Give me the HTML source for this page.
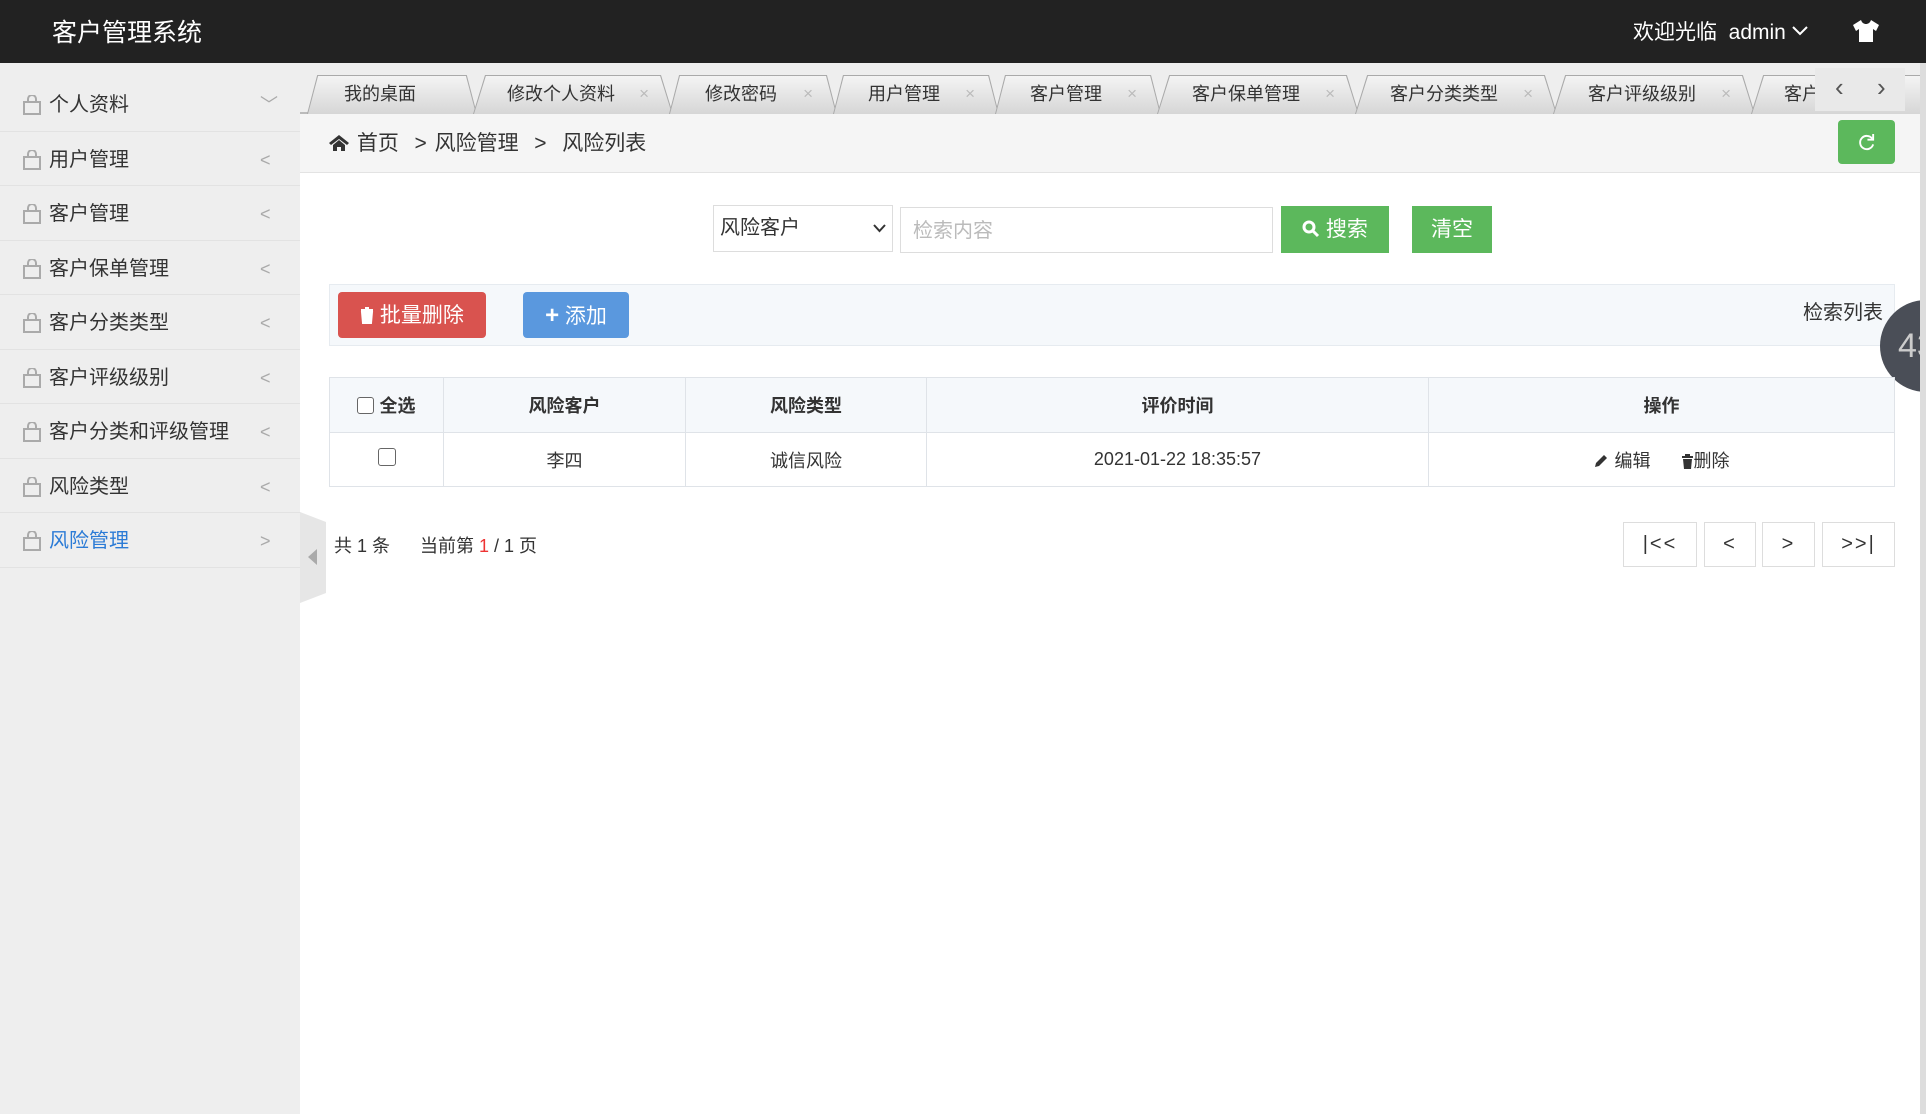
<!DOCTYPE html>
<html><head><meta charset="utf-8">
<style>
*{box-sizing:border-box;margin:0;padding:0}
body{width:1926px;height:1114px;overflow:hidden;background:#fff;font-family:"Liberation Sans","Noto Sans CJK SC",sans-serif;color:#333;position:relative}
.hd{position:absolute;left:0;top:0;width:1926px;height:63px;background:#222}
.hd .t{position:absolute;left:52px;top:13px;color:#fff;font-size:25px}
.hd .r{position:absolute;left:1633px;top:16px;color:#fff;font-size:21px}
.sb{position:absolute;left:0;top:63px;width:300px;height:1051px;background:#eee;padding-top:14px}
.it{height:54.5px;border-bottom:1px solid #e2e2e2;position:relative;font-size:20px;line-height:56px;padding-left:49px}
.it svg{position:absolute;left:23px;top:18px}
.it .ar{position:absolute;left:260px;top:0;color:#aaa;font-size:18px}
.it.act{color:#2b7bd6}
.tabs{position:absolute;left:300px;top:63px;width:1620px;height:51px;background:#eee;border-bottom:2px solid #bbb}
.tab{position:absolute;top:12px;height:39px;font-size:18px;line-height:38px;text-align:center;color:#333;padding-right:24px}
.tab .bd{position:absolute;inset:0;background:#aaa;clip-path:polygon(6% 0,94% 0,100% 100%,0 100%);}
.tab .in{position:absolute;inset:1px 1px 0 1px;background:linear-gradient(#f4f4f4,#d6d6d6);clip-path:polygon(6% 0,94% 0,100% 100%,0 100%);}
.tab span{position:relative}
.tab .x{position:absolute;right:24px;top:0;color:#bbb;font-size:17px}
.nav{position:absolute;left:1815px;top:68px;width:90px;height:43px;background:#e9e9e9;color:#555;font-size:26px;line-height:38px}
.bc{position:absolute;left:300px;top:114px;width:1620px;height:59px;background:#f5f5f5;border-bottom:1px solid #e3e3e3;font-size:21px;line-height:60px;padding-left:29px;word-spacing:2px}
.ref{position:absolute;left:1838px;top:120px;width:57px;height:44px;background:#5cb85c;border-radius:4px}
.sel{position:absolute;left:713px;top:205px;width:180px;height:47px;border:1px solid #ddd;font-size:20px;line-height:45px;padding-left:6px}
.inp{position:absolute;left:900px;top:207px;width:373px;height:46px;border:1px solid #ddd;font-size:20px;line-height:46px;padding-left:12px;color:#bbb}
.btn{position:absolute;color:#fff;font-size:20px;text-align:center}
.tb{position:absolute;left:329px;top:284px;width:1566px;height:62px;background:#f5f8fb;border:1px solid #e6ebf0}
table{position:absolute;left:329px;top:377px;width:1566px;border-collapse:collapse;font-size:18px}
td,th{border:1px solid #dfe3e8;text-align:center}
th{background:#f5f8fb;height:55px;font-weight:bold}
td{height:54px}
.pg{position:absolute;top:522px;height:45px;border:1px solid #ddd;font-size:20px;line-height:42px;text-align:center;letter-spacing:2px}
</style></head><body>
<div class="hd"><div class="t">客户管理系统</div>
<div class="r">欢迎光临&nbsp; admin <svg width="16" height="10" viewBox="0 0 16 10" style="vertical-align:3px"><path d="M1 1l7 7 7-7" stroke="#fff" stroke-width="2" fill="none"/></svg></div>
<svg style="position:absolute;left:1853px;top:20px" width="26" height="22" viewBox="0 0 26 22"><path d="M8 0L0 5l3 6 3-2v13h14V9l3 2 3-6-8-5c-1 3-3 4-5 4s-4-1-5-4z" fill="#fff"/></svg>
</div>
<div class="sb">
<div class="it"><svg width="18" height="20" viewBox="0 0 18 20"><rect x="1" y="7" width="16" height="12" fill="none" stroke="#aaa" stroke-width="2"/><path d="M5 8V4a4 4 0 018 0v4" fill="none" stroke="#aaa" stroke-width="2"/></svg>个人资料<span class="ar">﹀</span></div>
<div class="it"><svg width="18" height="20" viewBox="0 0 18 20"><rect x="1" y="7" width="16" height="12" fill="none" stroke="#aaa" stroke-width="2"/><path d="M5 8V4a4 4 0 018 0v4" fill="none" stroke="#aaa" stroke-width="2"/></svg>用户管理<span class="ar">&lt;</span></div>
<div class="it"><svg width="18" height="20" viewBox="0 0 18 20"><rect x="1" y="7" width="16" height="12" fill="none" stroke="#aaa" stroke-width="2"/><path d="M5 8V4a4 4 0 018 0v4" fill="none" stroke="#aaa" stroke-width="2"/></svg>客户管理<span class="ar">&lt;</span></div>
<div class="it"><svg width="18" height="20" viewBox="0 0 18 20"><rect x="1" y="7" width="16" height="12" fill="none" stroke="#aaa" stroke-width="2"/><path d="M5 8V4a4 4 0 018 0v4" fill="none" stroke="#aaa" stroke-width="2"/></svg>客户保单管理<span class="ar">&lt;</span></div>
<div class="it"><svg width="18" height="20" viewBox="0 0 18 20"><rect x="1" y="7" width="16" height="12" fill="none" stroke="#aaa" stroke-width="2"/><path d="M5 8V4a4 4 0 018 0v4" fill="none" stroke="#aaa" stroke-width="2"/></svg>客户分类类型<span class="ar">&lt;</span></div>
<div class="it"><svg width="18" height="20" viewBox="0 0 18 20"><rect x="1" y="7" width="16" height="12" fill="none" stroke="#aaa" stroke-width="2"/><path d="M5 8V4a4 4 0 018 0v4" fill="none" stroke="#aaa" stroke-width="2"/></svg>客户评级级别<span class="ar">&lt;</span></div>
<div class="it"><svg width="18" height="20" viewBox="0 0 18 20"><rect x="1" y="7" width="16" height="12" fill="none" stroke="#aaa" stroke-width="2"/><path d="M5 8V4a4 4 0 018 0v4" fill="none" stroke="#aaa" stroke-width="2"/></svg>客户分类和评级管理<span class="ar">&lt;</span></div>
<div class="it"><svg width="18" height="20" viewBox="0 0 18 20"><rect x="1" y="7" width="16" height="12" fill="none" stroke="#aaa" stroke-width="2"/><path d="M5 8V4a4 4 0 018 0v4" fill="none" stroke="#aaa" stroke-width="2"/></svg>风险类型<span class="ar">&lt;</span></div>
<div class="it act"><svg width="18" height="20" viewBox="0 0 18 20"><rect x="1" y="7" width="16" height="12" fill="none" stroke="#aaa" stroke-width="2"/><path d="M5 8V4a4 4 0 018 0v4" fill="none" stroke="#aaa" stroke-width="2"/></svg>风险管理<span class="ar">&gt;</span></div>
</div>
<svg style="position:absolute;left:300px;top:512px" width="26" height="91" viewBox="0 0 26 91"><path d="M0 0L26 10V81L0 91z" fill="#e6e6e6"/><path d="M8 45l9-8v16z" fill="#aaa"/></svg>
<div class="tabs">
<div class="tab" style="left:7px;width:170px"><div class="bd"></div><div class="in"></div><span>我的桌面</span></div>
<div class="tab" style="left:173px;width:200px"><div class="bd"></div><div class="in"></div><span>修改个人资料</span><span class="x">×</span></div>
<div class="tab" style="left:369px;width:168px"><div class="bd"></div><div class="in"></div><span>修改密码</span><span class="x">×</span></div>
<div class="tab" style="left:533px;width:166px"><div class="bd"></div><div class="in"></div><span>用户管理</span><span class="x">×</span></div>
<div class="tab" style="left:695px;width:166px"><div class="bd"></div><div class="in"></div><span>客户管理</span><span class="x">×</span></div>
<div class="tab" style="left:857px;width:202px"><div class="bd"></div><div class="in"></div><span>客户保单管理</span><span class="x">×</span></div>
<div class="tab" style="left:1055px;width:202px"><div class="bd"></div><div class="in"></div><span>客户分类类型</span><span class="x">×</span></div>
<div class="tab" style="left:1253px;width:202px"><div class="bd"></div><div class="in"></div><span>客户评级级别</span><span class="x">×</span></div>
<div class="tab" style="left:1451px;width:202px"><div class="bd"></div><div class="in"></div><span style="position:absolute;left:33px">客户</span></div>
</div>
<div class="nav"><span style="position:absolute;left:20px">&lsaquo;</span><span style="position:absolute;left:62px">&rsaquo;</span></div>
<div class="bc"><svg width="20" height="16" viewBox="0 0 20 16" style="vertical-align:-1px"><path d="M10 0L0 8l2 2 8-6 8 6 2-2zM4 10v6h4v-4h4v4h4v-6l-6-5z" fill="#333"/></svg> 首页 &nbsp;&gt; 风险管理 &nbsp;&gt;&nbsp; 风险列表</div>
<div class="ref"><svg style="position:absolute;left:19px;top:13px" width="19" height="19" viewBox="0 0 20 20"><path d="M16 6a7 7 0 1 0 1 6" stroke="#fff" stroke-width="2" fill="none"/><path d="M17 1v6h-6" stroke="#fff" stroke-width="2" fill="none"/></svg></div>
<div class="sel">风险客户<svg style="position:absolute;right:6px;top:18px" width="13" height="9" viewBox="0 0 13 9"><path d="M1 1l5.5 6L12 1" stroke="#333" stroke-width="2" fill="none"/></svg></div>
<div class="inp">检索内容</div>
<div class="btn" style="left:1281px;top:206px;width:108px;height:47px;line-height:48px;background:#5cb85c;font-size:21px"><svg width="18" height="18" viewBox="0 0 18 18" style="vertical-align:-2px"><circle cx="7" cy="7" r="5" stroke="#fff" stroke-width="3" fill="none"/><path d="M11 11l5 5" stroke="#fff" stroke-width="3"/></svg> 搜索</div>
<div class="btn" style="left:1412px;top:206px;width:80px;height:47px;line-height:48px;background:#5cb85c;font-size:21px">清空</div>
<div class="tb"></div>
<div class="btn" style="left:338px;top:292px;width:148px;height:46px;line-height:47px;background:#d9534f;border-radius:4px;font-size:21px"><svg width="14" height="17" viewBox="0 0 14 17" style="vertical-align:-2px"><path d="M1 3h12M5 1h4M2 5h10l-1 11H3z" stroke="#fff" stroke-width="2" fill="#fff"/></svg> 批量删除</div>
<div class="btn" style="left:523px;top:292px;width:106px;height:46px;line-height:47px;background:#5a98de;border-radius:4px;font-size:21px"><b style="font-size:24px">+</b> 添加</div>
<div style="position:absolute;left:1803px;top:296px;font-size:20px">检索列表</div>
<div style="position:absolute;left:1880px;top:300px;width:92px;height:92px;border-radius:50%;background:#4a4e57;color:#ccc;font-size:34px;line-height:92px;padding-left:18px">43</div>
<table>
<tr><th style="width:114px"><span style="display:inline-block;width:17px;height:17px;border:1px solid #666;border-radius:3px;vertical-align:-2px;background:#fff"></span> 全选</th><th style="width:242px">风险客户</th><th style="width:241px">风险类型</th><th style="width:502px">评价时间</th><th>操作</th></tr>
<tr><td><span style="display:inline-block;width:18px;height:18px;border:1px solid #666;border-radius:3px"></span></td><td>李四</td><td>诚信风险</td><td>2021-01-22 18:35:57</td><td><svg width="16" height="16" viewBox="0 0 16 16" style="vertical-align:-2px"><path d="M2 14l1-4 8-8 3 3-8 8z" fill="#333"/></svg> 编辑 &nbsp;&nbsp;&nbsp;&nbsp; <svg width="13" height="15" viewBox="0 0 13 15" style="vertical-align:-2px"><path d="M1 3h11M4 1h5" stroke="#333" stroke-width="2"/><path d="M2 5h9l-1 10H3z" fill="#333"/></svg>删除</td></tr>
</table>
<div style="position:absolute;left:334px;top:532px;font-size:18px">共 1 条 &nbsp;&nbsp;&nbsp;&nbsp; 当前第 <span style="color:#e33">1</span> / 1 页</div>
<div class="pg" style="left:1623px;width:74px">|&lt;&lt;</div>
<div class="pg" style="left:1704px;width:52px">&lt;</div>
<div class="pg" style="left:1762px;width:53px">&gt;</div>
<div class="pg" style="left:1822px;width:73px">&gt;&gt;|</div>
<div style="position:absolute;left:1920px;top:63px;width:6px;height:1051px;background:#ddd"></div>
</body></html>
